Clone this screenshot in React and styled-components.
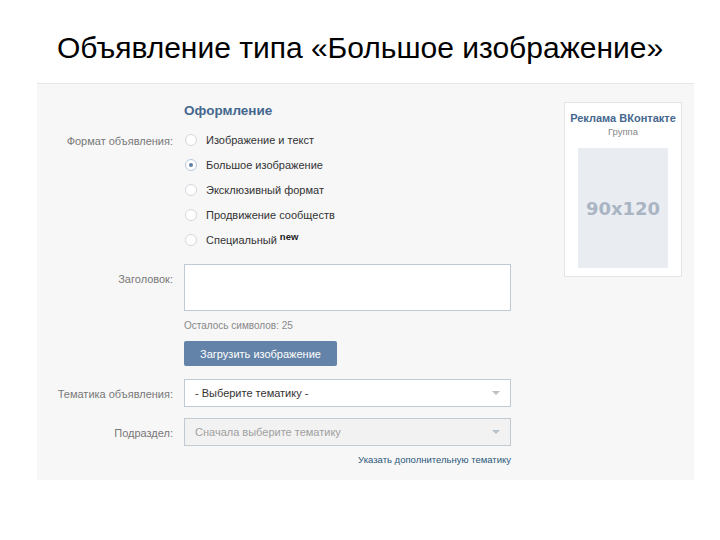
import React from "react";
import styled, { createGlobalStyle } from "styled-components";

const GlobalStyle = createGlobalStyle`
    html, body {
        margin: 0;
        padding: 0;
        background: #ffffff;
    }
    body {
        font-family: "Liberation Sans", Tahoma, Arial, sans-serif;
    }
`;

const formats = [
    { text: "Изображение и текст" },
    { text: "Большое изображение", checked: true },
    { text: "Эксклюзивный формат" },
    { text: "Продвижение сообществ" },
    { text: "Специальный", badge: "new" },
];

function App() {
    return (
        <>
            <GlobalStyle />
            <Slide>
                <Title>Объявление типа «Большое изображение»</Title>
                <Panel>
                    <Form>
                        <Section>Оформление</Section>
                        <Row>
                            <Label $top={1}>Формат объявления:</Label>
                            <RadioList>
                                {formats.map((f) => (
                                    <RadioRow key={f.text}>
                                        <Radio $checked={f.checked} />
                                        <RadioText>{f.text}</RadioText>
                                        {f.badge && <Badge>{f.badge}</Badge>}
                                    </RadioRow>
                                ))}
                            </RadioList>
                        </Row>
                        <Row $mt={17}>
                            <Label $top={8}>Заголовок:</Label>
                            <Field>
                                <TextArea />
                                <Hint>Осталось символов: 25</Hint>
                                <Button>Загрузить изображение</Button>
                            </Field>
                        </Row>
                        <Row $mt={13}>
                            <Label $top={8}>Тематика объявления:</Label>
                            <Select>
                                <span>- Выберите тематику -</span>
                                <Arrow />
                            </Select>
                        </Row>
                        <Row $mt={11}>
                            <Label $top={8}>Подраздел:</Label>
                            <Field>
                                <Select $disabled>
                                    <span>Сначала выберите тематику</span>
                                    <Arrow />
                                </Select>
                                <Link>Указать дополнительную тематику</Link>
                            </Field>
                        </Row>
                    </Form>
                    <Preview>
                        <PreviewTitle>Реклама ВКонтакте</PreviewTitle>
                        <PreviewSub>Группа</PreviewSub>
                        <PreviewImage>90x120</PreviewImage>
                    </Preview>
                </Panel>
            </Slide>
        </>
    );
}

export default App;

const Slide = styled.div`
    width: 720px;
    height: 540px;
    padding-top: 29px;
    box-sizing: border-box;
`;

const Title = styled.h1`
    margin: 0;
    font-family: "Liberation Sans", Arial, sans-serif;
    font-weight: normal;
    font-size: 30px;
    line-height: 37px;
    color: #000000;
    text-align: center;
`;

const Panel = styled.div`
    margin: 17px 0 0 37px;
    width: 657px;
    height: 396px;
    background: #f7f7f8;
    border-top: 1px solid #e6e6e6;
    display: flex;
    align-items: flex-start;
`;

const Form = styled.div`
    width: 474px;
    padding-top: 18px;
    display: flex;
    flex-direction: column;
`;

const Section = styled.div`
    margin-left: 147px;
    font-size: 13.5px;
    font-weight: bold;
    color: #45688e;
    line-height: 18px;
    margin-bottom: 13px;
`;

const Row = styled.div`
    display: grid;
    grid-template-columns: 136px 327px;
    column-gap: 11px;
    margin-top: ${(p) => p.$mt || 0}px;
`;

const Label = styled.div`
    text-align: right;
    font-size: 11px;
    color: #777777;
    padding-top: ${(p) => p.$top || 0}px;
    line-height: 14px;
    white-space: nowrap;
`;

const RadioList = styled.div`
    display: flex;
    flex-direction: column;
    gap: 11px;
`;

const RadioRow = styled.div`
    display: flex;
    align-items: center;
    height: 14px;
`;

const Radio = styled.span`
    width: 12px;
    height: 12px;
    margin-left: 1px;
    border-radius: 50%;
    border: 1px solid ${(p) => (p.$checked ? "#b7c8da" : "#d3d7dc")};
    background: #ffffff;
    box-sizing: border-box;
    position: relative;
    flex-shrink: 0;
    &::after {
        content: "";
        display: ${(p) => (p.$checked ? "block" : "none")};
        position: absolute;
        left: 3px;
        top: 3px;
        width: 4px;
        height: 4px;
        border-radius: 50%;
        background: #5d7fa5;
    }
`;

const RadioText = styled.span`
    margin-left: 9px;
    font-size: 11px;
    color: #333333;
    white-space: nowrap;
`;

const Badge = styled.sup`
    margin-left: 3px;
    font-size: 9.5px;
    font-weight: bold;
    color: #222222;
    position: relative;
    top: -4px;
`;

const Field = styled.div`
    display: flex;
    flex-direction: column;
    align-items: flex-start;
`;

const TextArea = styled.div`
    width: 327px;
    height: 47px;
    box-sizing: border-box;
    background: #ffffff;
    border: 1px solid #c0cad5;
`;

const Hint = styled.div`
    margin-top: 9px;
    font-size: 10px;
    color: #888888;
    line-height: 12px;
`;

const Button = styled.div`
    margin-top: 9px;
    width: 153px;
    height: 25px;
    background: #6383a8;
    border-radius: 2px;
    color: #ffffff;
    font-size: 11px;
    display: flex;
    align-items: center;
    justify-content: center;
`;

const Select = styled.div`
    width: 327px;
    height: 28px;
    box-sizing: border-box;
    border: 1px solid #c0cad5;
    background: ${(p) => (p.$disabled ? "#f2f2f2" : "#ffffff")};
    color: ${(p) => (p.$disabled ? "#a0a0a0" : "#333333")};
    font-size: 11px;
    display: flex;
    align-items: center;
    justify-content: space-between;
    padding: 0 10px 0 10px;
`;

const Arrow = styled.span`
    width: 0;
    height: 0;
    border-left: 4px solid transparent;
    border-right: 4px solid transparent;
    border-top: 4px solid #b8c0c8;
`;

const Link = styled.div`
    align-self: flex-end;
    margin-top: 8px;
    font-size: 9.5px;
    color: #2b587a;
    line-height: 12px;
    white-space: nowrap;
`;

const Preview = styled.div`
    margin: 18px 0 0 53px;
    width: 118px;
    height: 175px;
    box-sizing: border-box;
    background: #ffffff;
    border: 1px solid #e2e5e8;
    display: flex;
    flex-direction: column;
    align-items: center;
    padding-top: 9px;
`;

const PreviewTitle = styled.div`
    font-size: 11px;
    font-weight: bold;
    color: #45688e;
    white-space: nowrap;
    line-height: 13px;
`;

const PreviewSub = styled.div`
    font-size: 9.5px;
    color: #888888;
    line-height: 12px;
    margin-top: 1px;
`;

const PreviewImage = styled.div`
    margin-top: 10px;
    width: 90px;
    height: 120px;
    background: #e9edf2;
    color: #a9b5c3;
    font-family: "DejaVu Sans", sans-serif;
    font-size: 18px;
    font-weight: bold;
    display: flex;
    align-items: center;
    justify-content: center;
`;
